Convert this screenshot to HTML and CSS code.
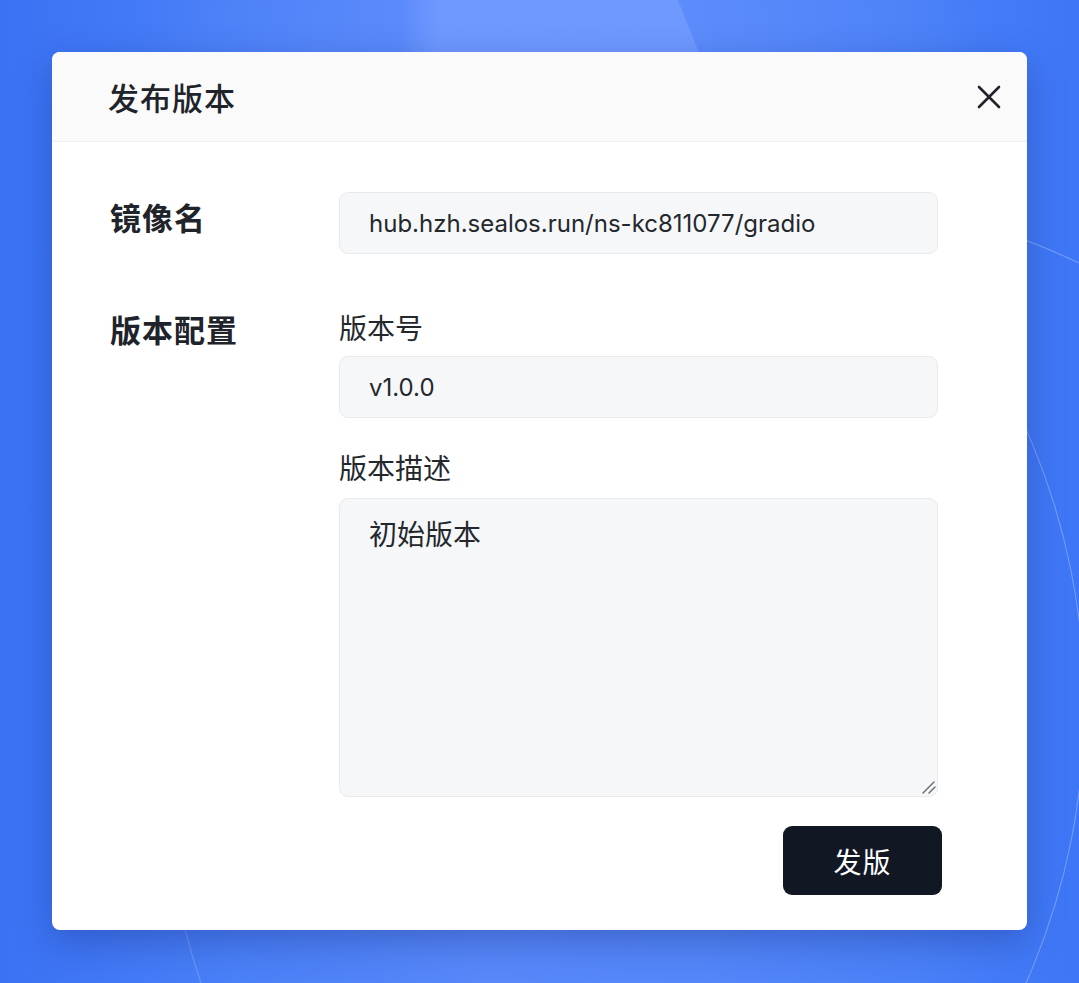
FILE: index.html
```html
<!DOCTYPE html>
<html lang="zh">
<head>
<meta charset="utf-8">
<link rel="stylesheet" href="styles.css">
</head>
<body>
<div class="stage">
  <div class="glow"></div>
  <div class="ring ring-a"></div>
  <div class="ring ring-b"></div>
  <div class="ring ring-c"></div>
  <div class="modal">
    <div class="modal-header">
      <h1 class="title">发布版本</h1>
      <button class="close" aria-label="关闭">
        <svg width="24" height="24" viewBox="0 0 24 24"><path d="M2 2 L22 22 M22 2 L2 22" stroke="#20242a" stroke-width="2.6" stroke-linecap="round" fill="none"/></svg>
      </button>
    </div>
    <div class="modal-body">
      <div class="row">
        <div class="label">镜像名</div>
        <div class="field-col">
          <div class="input">hub.hzh.sealos.run/ns-kc811077/gradio</div>
        </div>
      </div>
      <div class="row row-config">
        <div class="label">版本配置</div>
        <div class="field-col">
          <div class="sublabel">版本号</div>
          <input class="input" value="v1.0.0">
          <div class="sublabel sublabel-2">版本描述</div>
          <div class="textarea-wrap">
            <textarea class="textarea">初始版本</textarea>
            <svg class="grip" width="16" height="16" viewBox="0 0 16 16"><path d="M3 14 L14 3 M9 14 L15 8" stroke="#6e7277" stroke-width="1.5" stroke-linecap="round" fill="none"/></svg>
          </div>
        </div>
      </div>
      <div class="actions">
        <button class="btn-primary">发版</button>
      </div>
    </div>
  </div>
</div>
</body>
</html>
```
FILE: styles.css
```css
* { box-sizing: border-box; }
html, body { margin: 0; padding: 0; }
body {
  width: 1079px;
  height: 983px;
  overflow: hidden;
  font-family: Inter, "Noto Sans CJK SC", sans-serif;
  color: #24282c;
}
.stage {
  position: relative;
  width: 1079px;
  height: 983px;
  padding: 52px 52px 0 52px;
  background:
    radial-gradient(ellipse 560px 360px at 560px 40px, rgba(110,150,255,0.45), rgba(110,150,255,0) 75%),
    linear-gradient(90deg, #3a72f4 0%, #4a80f8 22%, #5888fa 45%, #5487fa 65%, #4a80f8 85%, #3d76f6 100%);
  overflow: hidden;
}
.glow {
  position: absolute;
  left: 400px;
  top: 0;
  width: 302px;
  height: 60px;
  background: linear-gradient(90deg, rgba(112,154,255,0) 0%, rgba(112,154,255,0.9) 12%, rgba(112,154,255,0.95) 100%);
  clip-path: polygon(0 0, 92% 0, 100% 100%, 0 100%);
}
.ring {
  position: absolute;
  border-radius: 50%;
  border: 1.5px solid transparent;
}
.ring-a {
  left: -287px;
  top: 20px;
  width: 1372px;
  height: 1372px;
  border-right-color: rgba(255,255,255,0.3);
}
.ring-b {
  left: 163px;
  top: 80px;
  width: 1360px;
  height: 1360px;
  border-left-color: rgba(255,255,255,0.22);
}
.ring-c {
  left: 77px;
  top: 194px;
  width: 1400px;
  height: 1400px;
  border-top-color: rgba(255,255,255,0.3);
}
.modal {
  position: relative;
  width: 975px;
  height: 878px;
  background: #fff;
  border-radius: 8px;
  box-shadow: 0 12px 36px rgba(20, 40, 120, 0.35);
  overflow: hidden;
  display: flex;
  flex-direction: column;
}
.modal-header {
  height: 90px;
  background: #fafafb;
  border-bottom: 1.5px solid #eff0f3;
  display: flex;
  align-items: center;
  justify-content: space-between;
  padding: 0 26px 0 56px;
}
.title {
  margin: 0;
  font-size: 31px;
  font-weight: 500;
  letter-spacing: 1px;
  color: #20242a;
}
.close {
  border: 0;
  background: none;
  padding: 0;
  width: 24px;
  height: 24px;
  display: flex;
}
.modal-body {
  padding: 50px 85px 0 58px;
  display: flex;
  flex-direction: column;
}
.row {
  display: flex;
}
.row-config {
  margin-top: 50px;
}
.label {
  width: 229px;
  flex: none;
  font-size: 31px;
  font-weight: 600;
  padding-top: 2px;
  color: #20242a;
  letter-spacing: 1px;
}
.field-col {
  width: 599px;
  display: flex;
  flex-direction: column;
}
.input {
  width: 599px;
  height: 62px;
  background: #f6f7f9;
  border: 1.5px solid #e8eaee;
  border-radius: 9px;
  padding: 0 29px;
  font-family: Inter, "Noto Sans CJK SC", sans-serif;
  font-size: 24px;
  color: #24282c;
  display: flex;
  align-items: center;
  outline: none;
}
.sublabel {
  font-size: 28px;
  line-height: 40px;
  margin-top: 5px;
  margin-bottom: 7px;
  color: #24282c;
}
.sublabel-2 { margin-top: 31px; margin-bottom: 9px; }
.textarea-wrap {
  position: relative;
  width: 599px;
  height: 299px;
}
.textarea {
  display: block;
  width: 599px;
  height: 299px;
  background: #f6f7f9;
  border: 1.5px solid #e8eaee;
  border-radius: 9px;
  padding: 16px 29px;
  font-family: Inter, "Noto Sans CJK SC", sans-serif;
  font-size: 28px;
  line-height: 40px;
  color: #24282c;
  outline: none;
  resize: none;
}
.grip {
  position: absolute;
  right: 2px;
  bottom: 2px;
}
.actions {
  display: flex;
  justify-content: flex-end;
  margin-top: 29px;
}
.btn-primary {
  width: 159px;
  height: 69px;
  border: 0;
  border-radius: 9px;
  background: #111824;
  color: #fff;
  font-family: Inter, "Noto Sans CJK SC", sans-serif;
  font-size: 28px;
  font-weight: 400;
  letter-spacing: 1px;
}
```
